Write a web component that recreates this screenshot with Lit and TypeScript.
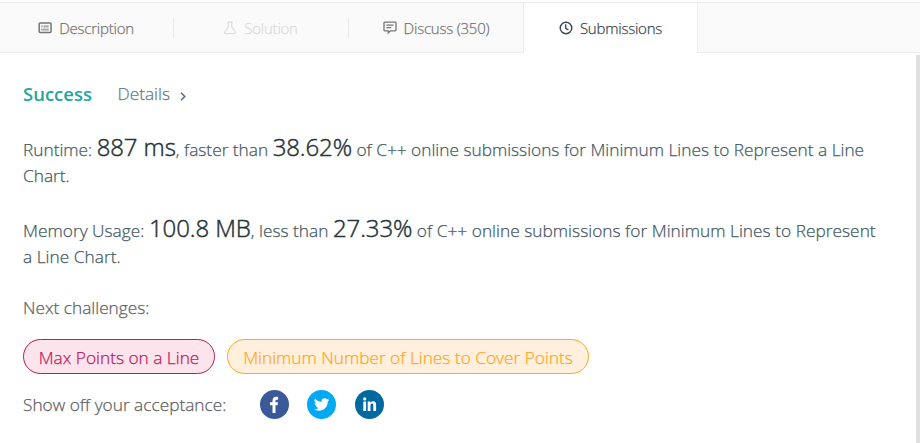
import { LitElement, html, css, svg } from "lit";
import { customElement } from "lit/decorators.js";

const icons = {
  description: svg`<rect x="1.2" y="2" width="11.8" height="9.4" rx="0.8" fill="none" stroke="currentColor" stroke-width="1.5"/><path d="M3.2 5.1h1.6M5.700 5.100h5M3.200 8.900h7.500" stroke="currentColor" stroke-width="1"/><path d="M3.200 7h1.200M5.300 7h2.400M8.400 7h2.300" stroke="currentColor" stroke-width=".7"/>`,
  solution: svg`<path d="M4.300 1.200h5.400M5.300 1.200v4.300L1.700 11.300q-.5 1.300.9 1.300h8.800q1.400 0 .9-1.300L8.700 5.500V1.200" fill="none" stroke="currentColor" stroke-width="1.200"/>`,
  discuss: svg`<path d="M1.700 1.200h10.600q.7 0 .7.700v7.200q0 .7-.7.7H7.400L5.300 12V9.800H1.700Q1 9.800 1 9.100V1.900Q1 1.200 1.700 1.200Z" fill="none" stroke="currentColor" stroke-width="1.300"/><path d="M3.400 4.200h7.200M3.400 6.700h4.900" stroke="currentColor" stroke-width="1.200"/>`,
  clock: svg`<circle cx="7" cy="7" r="5.800" fill="none" stroke="currentColor" stroke-width="1.400"/><path d="M6.700 3.300v4.100l2.700 1.500" fill="none" stroke="currentColor" stroke-width="1.300"/>`,
};

@customElement("app-root")
export class AppRoot extends LitElement {
  static styles = css`
    :host {
      display: block;
      height: 443px;
      overflow: hidden;
      background: #fff;
      color: #455a64;
      font: 300 17.28px/26px "Open Sans", "Noto Sans", sans-serif;
      -webkit-text-stroke: 0.25px currentColor;
    }
    svg { -webkit-text-stroke: 0; }
    .tabs {
      display: grid;
      grid-template-columns: 174px 175px 174px 175px 1fr;
      height: 51px;
      box-sizing: border-box;
      margin-top: 2px;
      background: linear-gradient(#ececec, #ececec) 0 100% / 100% 1px no-repeat #fafafa;
      border-top: 1px solid #ececec;
    }
    .tab {
      display: flex;
      align-items: center;
      justify-content: center;
      gap: 7px;
      color: #757575;
      font-size: 15px;
      letter-spacing: -0.22px;
      white-space: nowrap;
    }
    .tab svg { width: 14px; height: 14px; flex: none; }
    .first { padding-right: 2px; }
    .sep { background: linear-gradient(#e8e8e8, #e8e8e8) 100% 15px / 1px 20px no-repeat; }
    .off { color: #dcdcdc; padding-right: 2px; }
    .active {
      background: #fff;
      border: solid #ececec;
      border-width: 0 1px;
      color: #37474f;
    }
    .panel { display: flex; height: 390px; }
    .content { flex: 1; padding: 28px 30px 0 23px; white-space: nowrap; }
    .track { width: 4px; margin-top: 2px; background: #e0e0e0; }
    .head { display: flex; align-items: center; height: 26px; }
    .success { color: #26a69a; font-size: 18.500px; font-weight: 600; width: 94.500px; -webkit-text-stroke: 0; }
    .details { color: #607d8b; }
    .arrow { width: 6px; height: 9px; margin: 4px 0 0 10px; color: #546e7a; }
    .result { margin: 0; padding-top: 30px; }
    .result + .result { padding-top: 29px; letter-spacing: 0.03px; }
    .line { display: block; height: 26px; }
    .value { color: #263238; font-size: 24px; line-height: 20px; letter-spacing: -0.1px; -webkit-text-stroke-width: 0.45px; }
    .label { color: #616161; }
    .next { margin-top: 25px; }
    .pills { display: flex; gap: 12px; margin-top: 18px; }
    .pill {
      box-sizing: border-box;
      height: 35px;
      border: 1px solid;
      border-radius: 18px;
      line-height: 35px;
      text-align: center;
    }
    .pink { width: 192px; color: #c2185b; background: #fce4ec; }
    .amber { width: 362px; color: #ffa726; background: #fff0de; }
    .share { display: flex; align-items: center; height: 29px; margin-top: 16px; }
    .share .label { width: 237px; }
    .social { width: 29px; height: 29px; margin-right: 18px; }
    .social + .social { margin-right: 19px; }
  `;

  render() {
    const icon = (g: unknown) => html`<svg viewBox="0 0 14 14">${g}</svg>`;
    return html`
      <nav class="tabs">
        <div class="tab sep first">${icon(icons.description)}<span>Description</span></div>
        <div class="tab sep off">${icon(icons.solution)}<span>Solution</span></div>
        <div class="tab">${icon(icons.discuss)}<span>Discuss (350)</span></div>
        <div class="tab active">${icon(icons.clock)}<span>Submissions</span></div>
      </nav>
      <main class="panel">
        <section class="content">
          <div class="head">
            <span class="success">Success</span><span class="details">Details</span>
            <svg class="arrow" viewBox="0 0 6 9"><path d="M1 .8L4.800 4.500L1 8.200" fill="none" stroke="currentColor" stroke-width="1.500"/></svg>
          </div>
          <p class="result">
            <span class="line">Runtime: <span class="value">887 ms</span>, faster than <span class="value">38.62%</span> of C++ online submissions for Minimum Lines to Represent a Line</span>
            <span class="line">Chart.</span>
          </p>
          <p class="result">
            <span class="line">Memory Usage: <span class="value">100.8 MB</span>, less than <span class="value">27.33%</span> of C++ online submissions for Minimum Lines to Represent</span>
            <span class="line">a Line Chart.</span>
          </p>
          <div class="label next">Next challenges:</div>
          <div class="pills">
            <div class="pill pink">Max Points on a Line</div>
            <div class="pill amber">Minimum Number of Lines to Cover Points</div>
          </div>
          <div class="share">
            <span class="label">Show off your acceptance:</span>
            <svg class="social" viewBox="0 0 29 29"><circle cx="14.500" cy="14.500" r="14.500" fill="#3b5998"/><path d="M12.500 23v-7.700H10v-3h2.500v-1.700c0-2.500 1.500-3.800 3.700-3.800h1.900v2.900h-1.300c-1 0-1.300.5-1.300 1.300v1.300H18l-.4 3h-2.100V23z" fill="#fff"/></svg>
            <svg class="social" viewBox="0 0 29 29"><circle cx="14.500" cy="14.500" r="14.500" fill="#03a9f4"/><path transform="translate(7 6.800) scale(.64)" d="M23.950 4.570a10 10 0 0 1-2.820.77 4.960 4.960 0 0 0 2.160-2.720 9.900 9.900 0 0 1-3.120 1.180 4.920 4.920 0 0 0-8.380 4.480A13.900 13.900 0 0 1 1.640 3.160a4.920 4.920 0 0 0 1.520 6.570 4.900 4.900 0 0 1-2.230-.61v.06a4.920 4.920 0 0 0 3.950 4.830 5 5 0 0 1-2.210.08 4.940 4.940 0 0 0 4.600 3.420A9.870 9.870 0 0 1 0 19.540a14 14 0 0 0 7.550 2.210c9.050 0 14-7.500 14-13.980l-.02-.63a9.900 9.900 0 0 0 2.420-2.570z" fill="#fff"/></svg>
            <svg class="social" viewBox="0 0 29 29"><circle cx="14.500" cy="14.500" r="14.500" fill="#0069a0"/><circle cx="9.700" cy="8.900" r="1.600" fill="#fff"/><path d="M8.300 11.500h2.800V21H8.300zM12.700 11.500h2.700v1.300c.5-.9 1.400-1.500 2.700-1.500 2.300 0 3 1.500 3 3.700v6h-2.800v-5.300c0-1.300-.3-2.200-1.300-2.200-1.100 0-1.500.9-1.500 2.200V21h-2.800z" fill="#fff"/></svg>
          </div>
        </section>
        <div class="track"></div>
      </main>
    `;
  }
}
